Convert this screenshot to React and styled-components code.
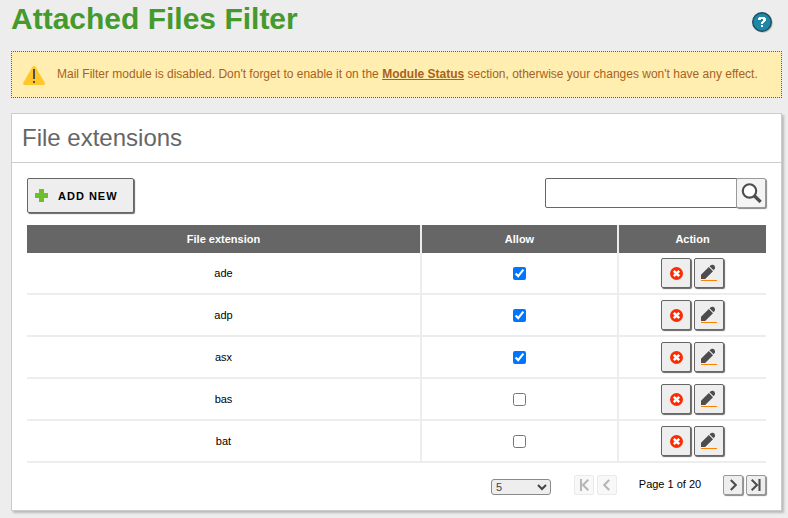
import React, { useState } from 'react';
import styled, { createGlobalStyle } from 'styled-components';

const GlobalStyle = createGlobalStyle`
  *, *::before, *::after { box-sizing: border-box; }
  body {
    margin: 0;
    background: #ededed;
    font-family: "Liberation Sans", Arial, sans-serif;
    font-size: 11px;
    color: #000;
    overflow: hidden;
  }
  svg { display: block; }
`;

const Page = styled.main`
  height: 518px;
  padding: 0 6px 0 11px;
`;

const PageHeader = styled.header`
  display: flex;
  justify-content: space-between;
  height: 51px;
`;

const PageTitle = styled.h1`
  margin: 1px 0 0;
  font-size: 30px;
  line-height: 36px;
  font-weight: bold;
  color: #449a2c;
`;

const HelpLink = styled.a`
  display: block;
  width: 22px;
  height: 22px;
  margin: 11px 8px 0 0;
`;

const Notice = styled.div`
  display: flex;
  align-items: center;
  height: 47px;
  padding-left: 11px;
  border: 1px dotted #7b5c10;
  background: #ffeeb0;
  color: #a9611b;
  font-size: 12px;
  white-space: nowrap;

  svg { margin: 2px 12px 0 0; }
  p { margin: 0 0 1px; }
  a { font-weight: bold; color: #a9611b; text-decoration: underline; }
`;

const Panel = styled.section`
  height: 398px;
  margin-top: 15px;
  border: 1px solid #ccc;
  background: #fff;
  box-shadow: 2px 2px 2px #bbb;
`;

const PanelTitle = styled.h2`
  height: 49px;
  margin: 0;
  padding-left: 10px;
  border-bottom: 1px solid #ccc;
  font-size: 24px;
  line-height: 48px;
  font-weight: normal;
  color: #666;
`;

const PanelBody = styled.div`
  padding: 15px 15px 0;
`;

const Toolbar = styled.div`
  display: flex;
  justify-content: space-between;
  height: 47px;
`;

const Button = styled.button`
  display: flex;
  align-items: center;
  justify-content: center;
  padding: 0;
  border: 1px solid #666;
  border-radius: 2px;
  background: #eee;
  box-shadow: 1px 1px 1px #666;
`;

const AddButton = styled(Button)`
  width: 107px;
  height: 35px;
  padding: 0 0 0 7px;
  justify-content: flex-start;
  gap: 10px;
  font: bold 11px "Liberation Sans", Arial, sans-serif;
  letter-spacing: 1px;
  color: #000;
`;

const SearchBox = styled.form`
  display: flex;
  height: 30px;
`;

const SearchInput = styled.input`
  width: 192px;
  height: 30px;
  padding: 0 6px;
  border: 1px solid #666;
  border-radius: 2px 0 0 2px;
  background: #fff;
  outline: none;
`;

const SearchButton = styled(Button)`
  width: 30px;
  height: 30px;
  margin-left: -1px;
  padding-left: 1px;
  border-color: #999;
  background: #f4f4f4;
  box-shadow: 1px 1px 1px #888;
`;

const Table = styled.table`
  width: 739px;
  table-layout: fixed;
  border-collapse: separate;
  border-spacing: 0;
  text-align: center;
`;

const HeadCell = styled.th`
  width: ${({ $width }) => $width}px;
  height: 28px;
  padding: 0;
  background: #666;
  color: #fff;
  font-size: 11px;
  border-right: 2px solid #ededed;
  &:last-child { border-right: 0; }
`;

const Cell = styled.td`
  height: 42px;
  padding: 0;
  border-right: 2px solid #ededed;
  border-bottom: 2px solid #ededed;
  &:last-child { border-right: 0; }
`;

const Checkbox = styled.input`
  display: block;
  width: 13px;
  height: 13px;
  margin: 0 auto;
`;

const Actions = styled.div`
  display: flex;
  justify-content: center;
  gap: 3px;
`;

const ActionButton = styled(Button)`
  width: 30px;
  height: 30px;
`;

const Pager = styled.div`
  display: flex;
  justify-content: flex-end;
  align-items: flex-start;
  padding-top: 12px;
`;

const PageSize = styled.select`
  width: 60px;
  height: 16px;
  margin: 4px 23px 0 0;
  padding: 0;
  border: 1px solid #8a8a8a;
  border-radius: 3px;
  background-color: #eee;
  color: #444;
  font: 11px "Liberation Sans", Arial, sans-serif;
`;

const PagerGroup = styled.div`
  display: flex;
  gap: 3px;
`;

const PagerButton = styled(Button)`
  width: 20px;
  height: 20px;
  border-color: #999;
  box-shadow: 1px 1px 1px #888;
  &:disabled { opacity: 0.4; border-color: #ccc; box-shadow: none; }
`;

const PageStatus = styled.span`
  width: 106px;
  line-height: 18px;
  text-align: center;
`;

const HelpIcon = () => (
  <svg width="22" height="22" viewBox="0 0 22 22">
    <circle cx="11" cy="12" r="9.8" fill="#999" opacity=".6" />
    <circle cx="10" cy="11" r="9.3" fill="#2087a8" stroke="#17505f" strokeWidth="1.4" />
    <path d="M7 6h6v1h1v3h-1v1h-1v1h-1v1H9v-2h1v-1h1V8H9v1H6V7h1zM9 14h2v2H9z" fill="#fff" />
  </svg>
);

const WarningIcon = () => (
  <svg width="22" height="19" viewBox="0 0 22 19">
    <path d="M9.2 1.2Q11-1.2 12.8 1.2L21.6 16.4Q22.6 19 20 19H2Q-.6 19 .4 16.4Z" fill="#ffc828" />
    <path d="M10 3h2v10h-2zM10 15h2v2h-2z" fill="#4d4d4d" />
  </svg>
);

const PlusIcon = () => (
  <svg width="13" height="13" viewBox="0 0 13 13">
    <path d="M4 0h5v4h4v5H9v4H4V9H0V4h4z" fill="#6abf2a" />
  </svg>
);

const SearchIcon = () => (
  <svg width="21" height="20" viewBox="0 0 21 20" fill="none" stroke="#4d4d4d">
    <circle cx="8.5" cy="7.9" r="6.7" strokeWidth="2.1" fill="#fff" />
    <path d="M13.3 12.8l6.3 6.1" strokeWidth="3.4" />
  </svg>
);

const DeleteIcon = () => (
  <svg width="13" height="13" viewBox="0 0 13 13">
    <circle cx="6.5" cy="6.5" r="6.5" fill="#ff2a00" />
    <path d="M3.8 3.8l5.4 5.4M9.2 3.8l-5.4 5.4" stroke="#fff" strokeWidth="2.6" />
  </svg>
);

const EditIcon = () => (
  <svg width="16" height="18" viewBox="0 0 16 18">
    <path d="M0 15v-4.2L7.8 3l4.2 4.2L4.2 15z" fill="#4d4d4d" />
    <path d="M8.5 2.3L9.8 1.2Q10.3.8 11 .8h.8Q14 1.2 14 3.2v.7q0 .7-.5 1.2L12.6 6.3z" fill="#4d4d4d" />
    <path d="M0 16.5h16" stroke="#ff8000" />
  </svg>
);

const PagerIcon = ({ kind }) => {
  const shapes = {
    first: 'M5 2v12M12.3 2.7L7 8l5.3 5.3',
    previous: 'M10.2 3L5.2 8l5 5',
    next: 'M5.8 3L10.8 8l-5 5',
    last: 'M11.5 2v12M3.7 2.7L9 8 3.7 13.3',
  };
  return (
    <svg width="16" height="16" viewBox="0 0 16 16">
      <path d={shapes[kind]} fill="none" stroke="#4d4d4d" strokeWidth="2.1" />
    </svg>
  );
};

const initialRows = [
  { name: 'ade', allowed: true },
  { name: 'adp', allowed: true },
  { name: 'asx', allowed: true },
  { name: 'bas', allowed: false },
  { name: 'bat', allowed: false },
];

export default function App() {
  const [rows, setRows] = useState(initialRows);
  const toggle = (name) =>
    setRows(rows.map((r) => (r.name === name ? { ...r, allowed: !r.allowed } : r)));

  return (
    <>
      <GlobalStyle />
      <Page>
        <PageHeader>
          <PageTitle>Attached Files Filter</PageTitle>
          <HelpLink href="#" aria-label="Help"><HelpIcon /></HelpLink>
        </PageHeader>
        <Notice>
          <WarningIcon />
          <p>
            Mail Filter module is disabled. Don't forget to enable it on the{' '}
            <a href="#">Module Status</a> section, otherwise your changes won't have any effect.
          </p>
        </Notice>
        <Panel>
          <PanelTitle>File extensions</PanelTitle>
          <PanelBody>
            <Toolbar>
              <AddButton type="button"><PlusIcon /><span>ADD NEW</span></AddButton>
              <SearchBox>
                <SearchInput aria-label="Search" />
                <SearchButton type="button" aria-label="Search"><SearchIcon /></SearchButton>
              </SearchBox>
            </Toolbar>
            <Table>
              <thead>
                <tr>
                  <HeadCell $width={395}>File extension</HeadCell>
                  <HeadCell $width={197}>Allow</HeadCell>
                  <HeadCell $width={147}>Action</HeadCell>
                </tr>
              </thead>
              <tbody>
                {rows.map(({ name, allowed }) => (
                  <tr key={name}>
                    <Cell>{name}</Cell>
                    <Cell>
                      <Checkbox
                        type="checkbox"
                        aria-label={`Allow ${name}`}
                        checked={allowed}
                        onChange={() => toggle(name)}
                      />
                    </Cell>
                    <Cell>
                      <Actions>
                        <ActionButton type="button" aria-label="Delete"><DeleteIcon /></ActionButton>
                        <ActionButton type="button" aria-label="Edit"><EditIcon /></ActionButton>
                      </Actions>
                    </Cell>
                  </tr>
                ))}
              </tbody>
            </Table>
            <Pager>
              <PageSize aria-label="Rows per page" defaultValue="5">
                <option>5</option>
                <option>10</option>
                <option>15</option>
              </PageSize>
              <PagerGroup>
                <PagerButton disabled aria-label="First"><PagerIcon kind="first" /></PagerButton>
                <PagerButton disabled aria-label="Previous"><PagerIcon kind="previous" /></PagerButton>
              </PagerGroup>
              <PageStatus>Page 1 of 20</PageStatus>
              <PagerGroup>
                <PagerButton aria-label="Next"><PagerIcon kind="next" /></PagerButton>
                <PagerButton aria-label="Last"><PagerIcon kind="last" /></PagerButton>
              </PagerGroup>
            </Pager>
          </PanelBody>
        </Panel>
      </Page>
    </>
  );
}
